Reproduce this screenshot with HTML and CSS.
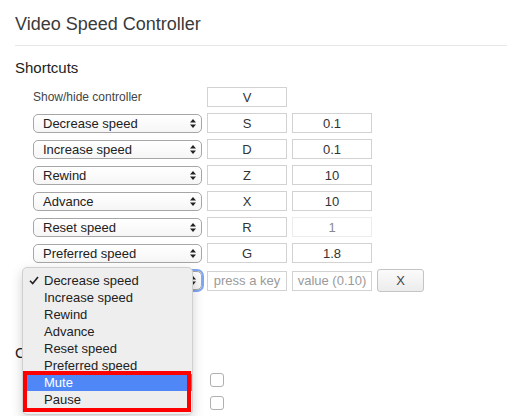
FILE: index.html
```html
<!DOCTYPE html>
<html lang="en">
<head>
  <meta charset="UTF-8">
  <meta name="viewport" content="width=device-width, initial-scale=1.0">
  <title>Video Speed Controller</title>
  <link rel="stylesheet" href="styles.css">
</head>
<body>

  <div class="page">
    <h1 class="title">Video Speed Controller</h1>

    <section class="section">
      <h2>Shortcuts</h2>
      <div class="rows">
        <div class="row">
          <label class="row-label">Show/hide controller</label>
          <input class="field" type="text" value="V">
        </div>
        <div class="row">
          <div class="select"><span>Decrease speed</span><svg class="arrows" width="6" height="9" viewBox="0 0 6 9"><path d="M3 0L6 3.5H0Z M3 9L0 5.5H6Z"/></svg></div>
          <input class="field" type="text" value="S">
          <input class="field" type="text" value="0.1">
        </div>
        <div class="row">
          <div class="select"><span>Increase speed</span><svg class="arrows" width="6" height="9" viewBox="0 0 6 9"><path d="M3 0L6 3.5H0Z M3 9L0 5.5H6Z"/></svg></div>
          <input class="field" type="text" value="D">
          <input class="field" type="text" value="0.1">
        </div>
        <div class="row">
          <div class="select"><span>Rewind</span><svg class="arrows" width="6" height="9" viewBox="0 0 6 9"><path d="M3 0L6 3.5H0Z M3 9L0 5.5H6Z"/></svg></div>
          <input class="field" type="text" value="Z">
          <input class="field" type="text" value="10">
        </div>
        <div class="row">
          <div class="select"><span>Advance</span><svg class="arrows" width="6" height="9" viewBox="0 0 6 9"><path d="M3 0L6 3.5H0Z M3 9L0 5.5H6Z"/></svg></div>
          <input class="field" type="text" value="X">
          <input class="field" type="text" value="10">
        </div>
        <div class="row">
          <div class="select"><span>Reset speed</span><svg class="arrows" width="6" height="9" viewBox="0 0 6 9"><path d="M3 0L6 3.5H0Z M3 9L0 5.5H6Z"/></svg></div>
          <input class="field" type="text" value="R">
          <input class="field" type="text" value="1" disabled>
        </div>
        <div class="row">
          <div class="select"><span>Preferred speed</span><svg class="arrows" width="6" height="9" viewBox="0 0 6 9"><path d="M3 0L6 3.5H0Z M3 9L0 5.5H6Z"/></svg></div>
          <input class="field" type="text" value="G">
          <input class="field" type="text" value="1.8">
        </div>
        <div class="row">
          <div class="select focused"><svg class="arrows" width="6" height="9" viewBox="0 0 6 9"><path d="M3 0L6 3.5H0Z M3 9L0 5.5H6Z"/></svg></div>
          <input class="field" type="text" placeholder="press a key">
          <input class="field" type="text" placeholder="value (0.10)">
          <button class="remove">X</button>
        </div>
      </div>
    </section>

    <section class="section other">
      <h2>C</h2>
      <div class="option">
        <span class="option-label"></span>
        <span class="check"></span>
      </div>
      <div class="option">
        <span class="option-label"></span>
        <span class="check"></span>
      </div>
    </section>

    <!-- open dropdown of the last select -->
    <ul class="menu">
      <li class="checked"><svg class="tick" width="10" height="9" viewBox="0 0 10 9"><path d="M1 4.8L3.7 7.6L9 1" fill="none" stroke="#222" stroke-width="1.6"/></svg>Decrease speed</li>
      <li>Increase speed</li>
      <li>Rewind</li>
      <li>Advance</li>
      <li>Reset speed</li>
      <li>Preferred speed</li>
      <li class="active">Mute</li>
      <li>Pause</li>
    </ul>
    <div class="mark"></div>
  </div>

</body>
</html>
```

FILE: styles.css
```css
body {
  margin: 0;
  background-color: #ffffff;
  color: #333;
  font-family: 'Liberation Sans', Helvetica, Arial, sans-serif;
}

.page {
  position: relative;
  padding: 0 0 0 15px;
  height: 416px;
  overflow: hidden;
}

.title {
  margin: 0;
  padding: 14px 0 11px;
  font-size: 18px;
  line-height: 20px;
  font-weight: normal;
  color: #3a3a3a;
  border-bottom: 1px solid #e8e8e8;
}

.section h2 {
  margin: 13px 0 10px;
  font-size: 15px;
  line-height: 18px;
  font-weight: normal;
  color: #222;
}

.rows {
  display: flex;
  flex-direction: column;
  gap: 6px;
  padding-left: 18px;
}

.row {
  display: flex;
  align-items: center;
  gap: 5px;
  min-height: 20px;
}

.row-label {
  width: 169px;
  font-size: 12px;
  color: #444;
}

.select {
  width: 169px;
  height: 19px;
  box-sizing: border-box;
  display: flex;
  align-items: center;
  justify-content: space-between;
  padding: 0 5px 0 9px;
  border: 1px solid #a6a6a6;
  border-radius: 5px;
  background: linear-gradient(#ffffff, #f6f6f6);
  font-size: 13px;
  color: #222;
  align-self: flex-end;
}

.row:last-child .select {
  align-self: center;
  justify-content: flex-end;
}

.select.focused {
  box-shadow: 0 0 0 2px #7ea6f2;
}

.arrows {
  fill: #222;
}

.field {
  width: 80px;
  height: 20px;
  box-sizing: border-box;
  margin: 0;
  padding: 0 4px;
  border: 1px solid #d2d2d2;
  border-radius: 0;
  font-family: inherit;
  font-size: 13px;
  color: #333;
  text-align: center;
  background: #fff;
  outline: none;
}

.field:disabled {
  border-color: #ececec;
  color: #8a8a8a;
}

.field::placeholder {
  color: #9a9a9a;
}

.remove {
  width: 47px;
  height: 23px;
  margin: 0;
  padding: 0;
  border: 1px solid #c4c4c4;
  border-radius: 3px;
  background: linear-gradient(#fbfbfb, #ececec);
  font-family: inherit;
  font-size: 13px;
  color: #444;
}

.other h2 {
  margin: 52px 0 6px;
}

.option {
  display: flex;
  align-items: center;
  height: 23px;
  padding-left: 18px;
}

.option-label {
  width: 177px;
}

.check {
  width: 12px;
  height: 12px;
  border: 1px solid #b0b0b0;
  border-radius: 3px;
  background: #fff;
}

/* dropdown list over the page */
.menu {
  position: absolute;
  left: 22px;
  top: 267px;
  width: 171px;
  margin: 0;
  padding: 4px 0 6px;
  list-style: none;
  box-sizing: border-box;
  background-color: #eeeeef;
  border: 1px solid #cfcfcf;
  border-radius: 5px;
  box-shadow: 0 4px 12px rgba(0, 0, 0, 0.18);
  font-size: 13px;
  color: #222;
}

.menu li {
  position: relative;
  height: 17px;
  line-height: 17px;
  padding-left: 21px;
}

.menu li.active {
  background-color: #4f88f6;
  color: #fff;
}

.tick {
  position: absolute;
  left: 6px;
  top: 4px;
}

.mark {
  position: absolute;
  left: 23px;
  top: 371px;
  width: 168px;
  height: 41px;
  box-sizing: border-box;
  border: 4px solid #ff0000;
}
```
